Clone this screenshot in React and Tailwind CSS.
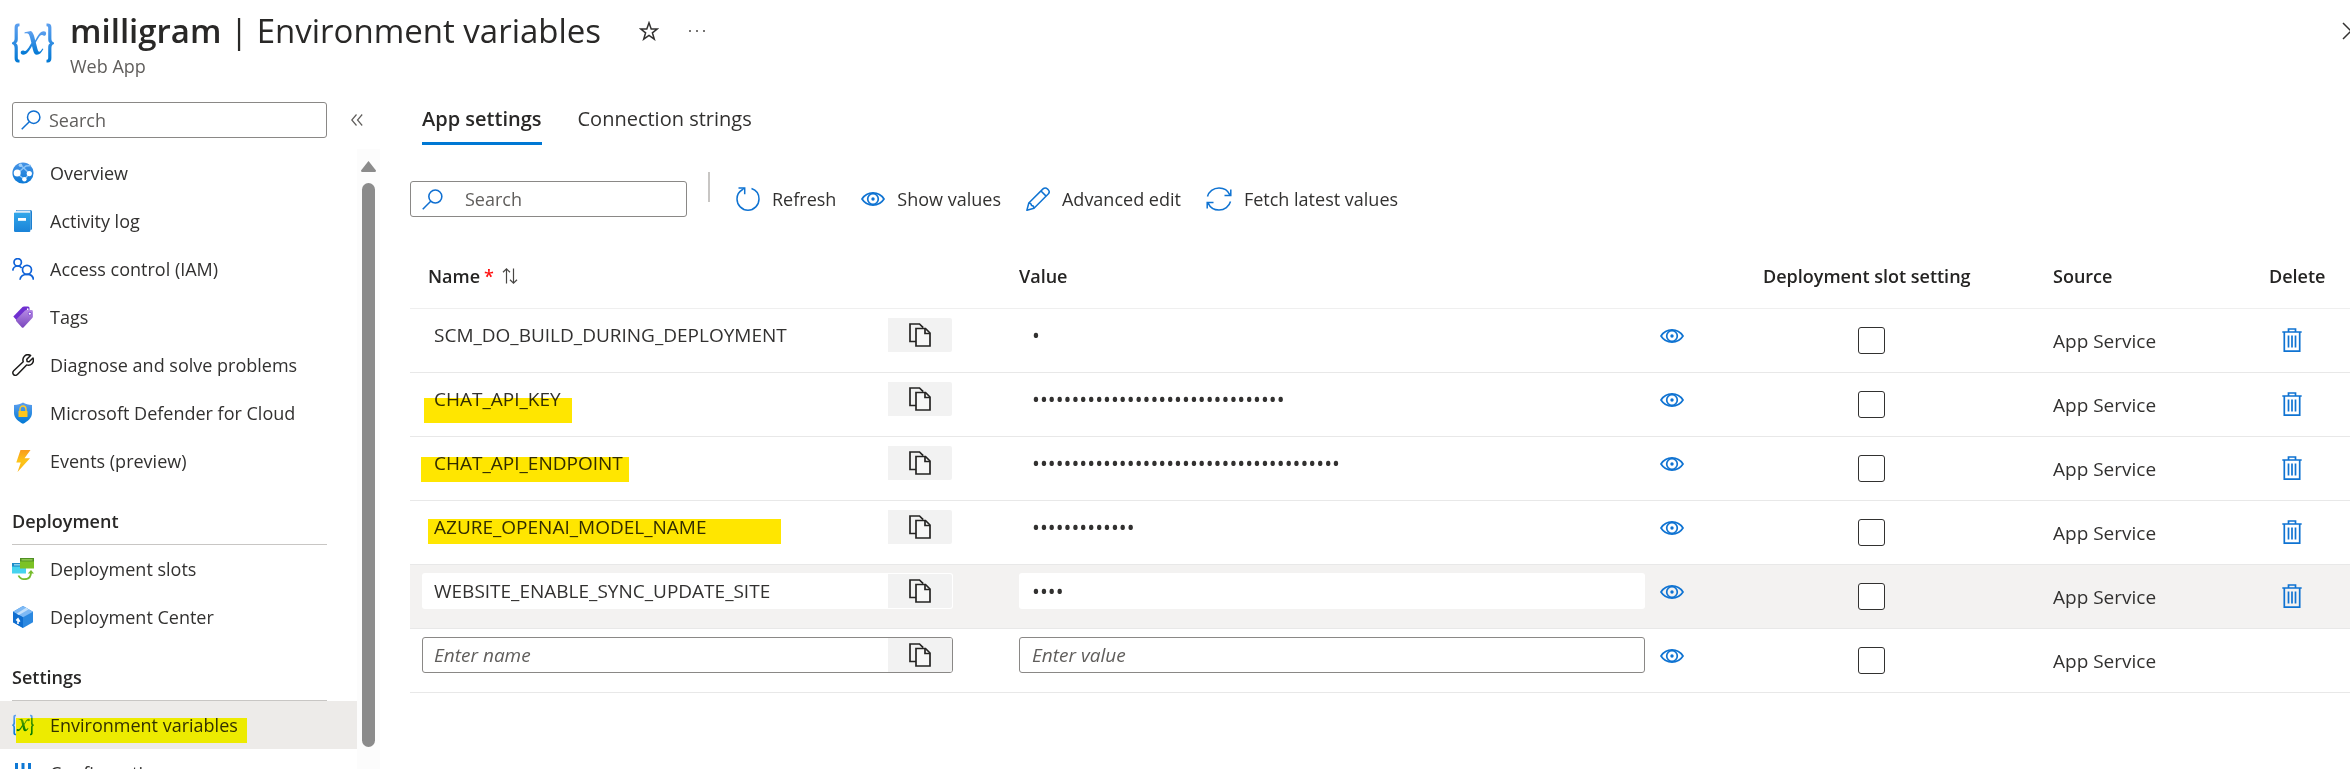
import React from "react";

/* ---------- icons ---------- */

function VariableIcon({ className, id }) {
  return (
    <svg viewBox="0 0 42 40" className={className} aria-hidden="true">
      <defs>
        <linearGradient id={id} x1="0" y1="0" x2="0" y2="1">
          <stop offset="0" stopColor="#5ea0ef" />
          <stop offset="1" stopColor="#0078d4" />
        </linearGradient>
      </defs>
      <g fill={`url(#${id})`}>
        <path d="M7.500 0.500h-1.200C3.600.5 2.600 2 2.600 4.600v10.600c0 2.500-.7 3.600-2.600 4.300v1.600c1.900.7 2.600 1.800 2.600 4.300v9.600c0 2.900 1 4.500 3.700 4.500h1.200v-2.700c-1.200 0-1.700-.6-1.700-2V24.500c0-2.300-.6-3.500-1.900-4.200 1.300-.7 1.900-1.900 1.900-4.200V5.200c0-1.400.5-2 1.700-2z" />
        <path d="M34.500 0.500h1.200c2.700 0 3.700 1.500 3.700 4.100v10.600c0 2.500.7 3.600 2.600 4.300v1.600c-1.900.7-2.600 1.800-2.600 4.300v9.600c0 2.900-1 4.500-3.700 4.500h-1.200v-2.700c1.200 0 1.700-.6 1.700-2V24.500c0-2.300.6-3.500 1.900-4.200-1.300-.7-1.900-1.900-1.900-4.200V5.200c0-1.400-.5-2-1.700-2z" />
        <path d="M12.600 9.300 19 8c2 1.600 2.900 4 3.600 7l.6 2.400c2.300-4 4.800-9.200 8.600-9.200 1.500 0 2.300.9 2.300 2.200 0 1.400-.9 2.300-2.100 2.300-1 0-1.500-.6-2.400-.6-1.500 0-3.700 3.600-5.800 7.400l1.600 6.200c.5 1.900 1 3 1.800 3 1 0 2-1.300 3.200-3.300l1 .6c-1.800 3.400-3.800 5.800-6.500 5.800-2.200 0-3.100-1.500-3.900-4.700l-1-4.100c-2.600 4.600-5 8.800-8.800 8.800-1.600 0-2.500-.9-2.500-2.200s.9-2.200 2.100-2.200c1.100 0 1.500.6 2.400.6 1.500 0 3.700-3.500 6.200-7.900l-1.300-5.400c-.8-3.200-1.500-4.500-3.500-4.500-.7 0-1.300.1-2 .3z" />
      </g>
    </svg>
  );
}

function SearchIcon({ className }) {
  return (
    <svg viewBox="0 0 20 20" className={className} fill="none" stroke="#0f6fd1" strokeWidth="1.500" aria-hidden="true">
      <circle cx="12.700" cy="7.200" r="6.200" />
      <path d="M8.300 11.700.7 19.300" />
    </svg>
  );
}

function StarIcon() {
  return (
    <svg viewBox="0 0 20 20" className="size-5" fill="none" stroke="#323130" strokeWidth="1.500" aria-hidden="true">
      <path d="M10 1.800l2.200 6.100h6.200l-5 3.900 1.900 6.400L10 14.400l-5.300 3.800 1.900-6.400-5-3.900h6.200z" />
    </svg>
  );
}

function CollapseIcon() {
  return (
    <svg viewBox="0 0 12 12" className="size-3" fill="none" stroke="#605e5c" strokeWidth="1.200" aria-hidden="true">
      <path d="M5.500.5 0.800 6l4.700 5.500M11.200.5 6.500 6l4.700 5.500" />
    </svg>
  );
}

function GlobeIcon() {
  return (
    <svg viewBox="0 0 22 22" className="size-[22px]" aria-hidden="true">
      <defs>
        <linearGradient id="globe" x1="0" y1="0" x2="0" y2="1">
          <stop offset="0" stopColor="#4894e6" />
          <stop offset="1" stopColor="#0b79d6" />
        </linearGradient>
      </defs>
      <circle cx="11" cy="11" r="10.600" fill="url(#globe)" />
      <path d="M8 2.500 17.500 11.500M5 11.500 14 4 19 3.500M5 11.500 12.500 17.500 17.500 11.500" stroke="#8cc4f7" strokeWidth="1.400" fill="none" />
      <circle cx="5.200" cy="11" r="3.500" fill="#fff" />
      <circle cx="17.300" cy="11.600" r="2.600" fill="#fff" />
      <circle cx="12.400" cy="17.300" r="2.200" fill="#fff" />
      <circle cx="8.500" cy="3.300" r="1.800" fill="#9fd0fa" />
    </svg>
  );
}

function BookIcon() {
  return (
    <svg viewBox="0 0 22 22" className="size-[22px]" aria-hidden="true">
      <defs>
        <linearGradient id="book" x1="0" y1="0" x2="0" y2="1">
          <stop offset="0" stopColor="#32a7ea" />
          <stop offset="1" stopColor="#1a83d8" />
        </linearGradient>
      </defs>
      <path d="M4 0h14.500q1.500 0 1.500 1.500v17q0 1.500-1.500 1.500H4z" fill="#1b7fd0" />
      <path d="M3 2.600 4.600.6h13.800V20H4z" fill="#dcebf8" />
      <path d="M2 2.700h15.300q1 0 1 1V21q0 1-1 1H3.300Q2 22 2 20.700z" fill="url(#book)" />
      <rect x="6" y="8" width="8" height="2.800" fill="#fff" />
    </svg>
  );
}

function PeopleIcon() {
  return (
    <svg viewBox="0 0 22 22" className="size-[22px]" fill="none" stroke="#0f62d8" strokeWidth="1.700" aria-hidden="true">
      <circle cx="5.700" cy="4.300" r="3.700" />
      <path d="M.8 12.600C.9 10 3 8 5.700 8c1.700 0 3.100.7 4 1.900" />
      <circle cx="15" cy="11.800" r="4.500" />
      <path d="M8 21.800c.2-3.400 3.300-5.500 7-5.500s6.300 2.100 6.400 5.500" />
    </svg>
  );
}

function TagIcon() {
  return (
    <svg viewBox="0 0 22 22" className="size-[22px]" aria-hidden="true">
      <defs>
        <linearGradient id="tag" x1="0" y1="0" x2="0" y2="1">
          <stop offset="0" stopColor="#b58ae4" />
          <stop offset="1" stopColor="#7a46bd" />
        </linearGradient>
      </defs>
      <path d="M1.300 10.500 10.500 1q.6-.6 1.500-.6h4q1.500 0 1.500 1.500v5L7 17z" fill="#6f2fd0" />
      <path d="M4.500 13.300 13 4.600q.6-.6 1.500-.6h5q1.400 0 1.400 1.400v5.200q0 .9-.6 1.500L11.500 21.400q-.8.700-1.600 0L4.500 15.500q-1-1.100 0-2.200z" fill="url(#tag)" />
      <circle cx="17.800" cy="7.700" r="1.500" fill="#fff" stroke="#6f2fd0" strokeWidth=".8" />
      <circle cx="15.700" cy="3.200" r=".9" fill="#fff" />
    </svg>
  );
}

function WrenchIcon() {
  return (
    <svg viewBox="0 0 22 22" className="size-[22px]" fill="none" stroke="#1b1a19" strokeWidth="1.500" strokeLinejoin="round" aria-hidden="true">
      <path d="M18.600 1.500 14.800 5.300l.3 2.200 2 .3 3.900-3.800c.7 2 .4 4.300-1 5.700-1.500 1.500-3.500 1.800-5.400 1.200L5.400 20.500c-1.200 1.200-2.800 1.100-3.800.1s-1.200-2.700.1-3.900l9.500-9c-.6-2-.3-4 1.200-5.500 1.600-1.600 4.100-1.900 6.200-.7z" />
    </svg>
  );
}

function ShieldIcon() {
  return (
    <svg viewBox="0 0 22 22" className="size-[22px]" aria-hidden="true">
      <defs>
        <linearGradient id="shield" x1="0" y1="0" x2="0" y2="1">
          <stop offset="0" stopColor="#5ea0ef" />
          <stop offset="1" stopColor="#0078d4" />
        </linearGradient>
      </defs>
      <path d="M11 .5c2.500 1.800 5.300 2.300 9 2.400v8c0 5-4.500 8.500-9 10.800C6.500 19.400 2 15.900 2 10.900v-8c3.700-.1 6.500-.6 9-2.400z" fill="url(#shield)" />
      <path d="M8 9.500V7.200c0-1.900 1.200-3.200 3-3.200s3 1.300 3 3.200v2.300" fill="none" stroke="#ffca2a" strokeWidth="1.400" />
      <rect x="6.500" y="9" width="9" height="6" rx=".6" fill="#ffc61c" />
    </svg>
  );
}

function BoltIcon() {
  return (
    <svg viewBox="0 0 22 22" className="size-[22px]" aria-hidden="true">
      <defs>
        <linearGradient id="bolt" x1="0" y1="0" x2="0" y2="1">
          <stop offset="0" stopColor="#f99b1c" />
          <stop offset=".5" stopColor="#fcc419" />
          <stop offset="1" stopColor="#fbb216" />
        </linearGradient>
      </defs>
      <path d="M8.500 0H18.500L12.500 8.200H18L5.500 22 8.800 12.500H4.300z" fill="url(#bolt)" />
    </svg>
  );
}

function SlotsIcon() {
  return (
    <svg viewBox="0 0 22 22" className="size-[22px]" aria-hidden="true">
      <rect x="0" y="5" width="14" height="10.500" fill="#46d3ee" />
      <rect x="0" y="5" width="14" height="3.600" fill="#1e8cc8" />
      <rect x="2" y="6.200" width="6" height="1.200" fill="#a6e3f5" />
      <rect x="8" y="0" width="14" height="10.500" fill="#7cc225" />
      <rect x="8" y="0" width="14" height="3.400" fill="#4f8f22" />
      <rect x="9.500" y="1.200" width="11" height="1.300" fill="#9bd35a" />
      <path d="M6.500 17.500c1 2.500 3.500 3.700 6 3.700 4 0 6.500-2.700 6.500-7" fill="none" stroke="#76bc2d" strokeWidth="1.800" />
      <path d="M15.800 15.500 19 12l3 3.500z" fill="#76bc2d" />
    </svg>
  );
}

function BoxIcon() {
  return (
    <svg viewBox="0 0 22 22" className="size-[22px]" aria-hidden="true">
      <path d="M11 0 21 5.700v10.600L11 22 1 16.300V5.700z" fill="#2b88e0" />
      <path d="M11 0 21 5.700 11 11.300 1 5.700z" fill="#7db9f5" />
      <path d="M11 11.300V22L1 16.300V5.700z" fill="#0f6ed0" />
      <path d="M14 1.700 4.500 7.700 7 9.100 16.800 3.300z" fill="#c3e0fb" />
      <path d="M6 18v-4.800M4.200 14.500 6 12.800l1.800 2.800" fill="none" stroke="#fff" strokeWidth="1.600" />
    </svg>
  );
}

function SlidersIcon() {
  return (
    <svg viewBox="0 0 22 22" className="size-[22px]" aria-hidden="true">
      <path d="M4.500 1v20M11 1v20M17.500 1v20" stroke="#0f78d4" strokeWidth="3" />
      <rect x="2" y="12" width="5" height="4" fill="#5ea0ef" />
      <rect x="8.500" y="8" width="5" height="4" fill="#5ea0ef" />
      <rect x="15" y="14" width="5" height="4" fill="#5ea0ef" />
    </svg>
  );
}

function RefreshIcon() {
  return (
    <svg viewBox="0 0 24 24" className="size-6" fill="none" stroke="#0f73d2" strokeWidth="1.500" aria-hidden="true">
      <path d="M15.500 1.500C20 3 23 7.200 23 12c0 6.100-4.900 11.200-11 11.200S1 18.100 1 12c0-4 2.200-7.600 5.600-9.500L8 1.300" />
      <path d="M2.500 1h6.200v6.200" />
    </svg>
  );
}

function EyeIcon() {
  return (
    <svg viewBox="0 0 24 14" className="w-6 h-[14px]" fill="none" stroke="#0f73d2" strokeWidth="1.700" aria-hidden="true">
      <path d="M1 7C3.500 3 7.500.9 12 .9S20.500 3 23 7c-2.500 4-6.500 6.100-11 6.100S3.500 11 1 7z" />
      <circle cx="12" cy="7" r="5.300" />
      <circle cx="12" cy="7" r="1.700" fill="#0f73d2" stroke="none" />
    </svg>
  );
}

function PencilIcon() {
  return (
    <svg viewBox="0 0 24 24" className="size-6" fill="none" stroke="#0f73d2" strokeWidth="1.500" strokeLinejoin="round" aria-hidden="true">
      <path d="M.9 23.200 2.800 16 17 1.900c1.300-1.300 3.200-1.300 4.400 0l.8.8c1.200 1.200 1.200 3 0 4.300L8 21.200z" />
      <path d="M15 4l5.100 5.100M2.800 16c2 .1 2.600.8 2.700 2.500 1.600 0 2.400.9 2.500 2.700" />
    </svg>
  );
}

function SyncIcon() {
  return (
    <svg viewBox="0 0 26 24" className="h-6 w-[26px]" fill="none" stroke="#0f73d2" strokeWidth="1.500" aria-hidden="true">
      <path d="M1.500 9.500C2.800 4.600 7.400 1 13 1c4.900 0 9 2.700 10.900 6.900M24.800 2.500v5.900h-6.300" />
      <path d="M24.500 14.500C23.200 19.400 18.600 23 13 23c-4.900 0-9-2.700-10.900-6.900M1.200 21.500v-5.900h6.300" />
    </svg>
  );
}

function SortIcon() {
  return (
    <svg viewBox="0 0 16 16" className="size-4" fill="none" stroke="#484644" strokeWidth="1.200" aria-hidden="true">
      <path d="M4.500 15.500V1M1 4.300 4.500.9 8 4.300M11.500.5V15M8 11.700l3.500 3.400 3.500-3.400" />
    </svg>
  );
}

function CopyIcon() {
  return (
    <svg viewBox="0 0 22 24" className="h-6 w-[22px]" fill="none" stroke="#252423" strokeWidth="1.700" aria-hidden="true">
      <path d="M7 18.500H1V1h9.500l3.700 3.700" />
      <path d="M7 5.500h9.500L21 10v13H7z" fill="#f7f7f7" />
      <path d="M16 5.500V10.500h5" />
    </svg>
  );
}

function TrashIcon() {
  return (
    <svg viewBox="0 0 20 24" className="h-6 w-5" fill="none" stroke="#0f73d2" strokeWidth="1.700" aria-hidden="true">
      <path d="M.3 4h19.400M6.500 3.800V1h7v2.800M2.300 4v19.100h15.400V4" />
      <path d="M6.500 7.500v12M10 7.500v12M13.500 7.500v12" />
    </svg>
  );
}

/* ---------- sidebar ---------- */

function NavItem({ icon, label, active }) {
  return (
    <a
      href="#"
      className={
        "relative flex h-12 shrink-0 items-center gap-4 px-3 " + (active ? "bg-[#edebe9]" : "")
      }
      aria-current={active ? "page" : undefined}
    >
      <span className="flex w-[22px] justify-center">{icon}</span>
      <span className="whitespace-nowrap">{label}</span>
      {active && (
        <span className="absolute top-[17px] left-4 h-[25px] w-[231px] bg-[#ffff00] mix-blend-multiply" />
      )}
    </a>
  );
}

function NavHeading({ children }) {
  return (
    <h2 className="mr-[30px] ml-3 flex h-[60px] shrink-0 items-end border-b border-[#c8c6c4] pb-[9px] leading-7 font-semibold text-[#292827]">
      {children}
    </h2>
  );
}

function Sidebar() {
  return (
    <aside className="flex w-[380px] shrink-0 flex-col">
      <div className="flex items-center gap-6 pt-[7px] pl-3">
        <label className="flex h-9 w-[315px] items-center gap-2 rounded-[3px] border border-[#8a8886] px-2">
          <SearchIcon className="size-5 shrink-0" />
          <input
            type="text"
            aria-label="Search menu"
            placeholder="Search"
            className="w-full min-w-0 outline-none placeholder:text-[#605e5c]"
          />
        </label>
        <button aria-label="Collapse menu">
          <CollapseIcon />
        </button>
      </div>
      <div className="mt-[11px] flex min-h-0 flex-1 overflow-hidden">
        <nav className="flex min-w-0 flex-1 flex-col overflow-hidden">
          <NavItem icon={<GlobeIcon />} label="Overview" />
          <NavItem icon={<BookIcon />} label="Activity log" />
          <NavItem icon={<PeopleIcon />} label="Access control (IAM)" />
          <NavItem icon={<TagIcon />} label="Tags" />
          <NavItem icon={<WrenchIcon />} label="Diagnose and solve problems" />
          <NavItem icon={<ShieldIcon />} label="Microsoft Defender for Cloud" />
          <NavItem icon={<BoltIcon />} label="Events (preview)" />
          <NavHeading>Deployment</NavHeading>
          <NavItem icon={<SlotsIcon />} label="Deployment slots" />
          <NavItem icon={<BoxIcon />} label="Deployment Center" />
          <NavHeading>Settings</NavHeading>
          <NavItem
            icon={<VariableIcon className="h-[22px] w-[22px]" id="var-small" />}
            label="Environment variables"
            active
          />
          <NavItem icon={<SlidersIcon />} label="Configuration" />
        </nav>
        <div className="flex w-[23px] shrink-0 flex-col items-center bg-[#fcfcfc] pt-3 pb-[22px]">
          <svg viewBox="0 0 15 11" className="h-[11px] w-[15px]" aria-hidden="true">
            <path d="M7.500 0 15 9.500q0 1.500-1.200 1.500H1.200Q0 11 0 9.500z" fill="#8b8b8b" />
          </svg>
          <div className="mt-[11px] w-[13px] flex-1 rounded-full bg-[#8b8b8b]" />
        </div>
      </div>
    </aside>
  );
}

/* ---------- settings table ---------- */

const rows = [
  { name: "SCM_DO_BUILD_DURING_DEPLOYMENT", length: 1 },
  { name: "CHAT_API_KEY", length: 32, mark: "top-[25px] left-[14px] w-[148px]" },
  { name: "CHAT_API_ENDPOINT", length: 39, mark: "top-5 left-[11px] w-[208px]" },
  { name: "AZURE_OPENAI_MODEL_NAME", length: 13, mark: "top-[18px] left-[18px] w-[353px]" },
  { name: "WEBSITE_ENABLE_SYNC_UPDATE_SITE", length: 4, hovered: true },
  { name: "", length: 0, blank: true },
];

function SettingRow({ row }) {
  const frame = row.blank ? "border-[#8a8886]" : "border-transparent";
  return (
    <tr className={"h-16 border-b border-[#e8e8e8] " + (row.hovered ? "bg-[#f3f2f1]" : "")}>
      <td className="relative px-3 pt-2 align-top">
        <div className={"flex h-9 w-[531px] overflow-hidden rounded-[3px] border " + frame + (row.hovered ? " bg-white" : "")}>
          <input
            type="text"
            aria-label="Setting name"
            defaultValue={row.name}
            placeholder="Enter name"
            className="min-w-0 flex-1 px-[11px] text-[19px] outline-none placeholder:text-[#605e5c] placeholder:italic"
          />
          <button aria-label="Copy name" className="flex w-16 items-center justify-center bg-[#f2f2f2]">
            <CopyIcon />
          </button>
        </div>
        {row.mark && (
          <span className={"pointer-events-none absolute h-[25px] bg-[#ffe600] mix-blend-multiply " + row.mark} />
        )}
      </td>
      <td className="pt-2 pr-[67px] pl-3 align-top">
        <div className="flex items-center gap-[15px]">
          <input
            type={row.blank ? "text" : "password"}
            aria-label="Setting value"
            defaultValue={"x".repeat(row.length)}
            placeholder="Enter value"
            className={
              "h-9 min-w-0 flex-1 rounded-[3px] border px-3 outline-none placeholder:text-[#605e5c] placeholder:italic " +
              frame +
              (row.blank ? " text-[19px]" : " text-[21px]") +
              (row.hovered ? " bg-white" : "")
            }
          />
          <button aria-label="Show value" className="pt-[3px]">
            <EyeIcon />
          </button>
        </div>
      </td>
      <td className="pr-[50px]">
        <div className="flex justify-center">
          <input
            type="checkbox"
            aria-label="Deployment slot setting"
            className="size-[27px] appearance-none rounded-[3px] border border-[#323130] bg-white"
          />
        </div>
      </td>
      <td className="px-3 pt-px text-[19px]">App Service</td>
      <td className="pl-[25px]">
        {!row.blank && (
          <button aria-label="Delete setting" className="block">
            <TrashIcon />
          </button>
        )}
      </td>
    </tr>
  );
}

function SettingsTable() {
  return (
    <table className="mt-[27px] w-full table-fixed border-collapse text-left">
      <colgroup>
        <col className="w-[597px]" />
        <col />
        <col className="w-[290px]" />
        <col className="w-[216px]" />
        <col className="w-[93px]" />
      </colgroup>
      <thead>
        <tr className="h-16 border-b border-[#efefef] text-[#252423]">
          <th className="pl-[18px] font-semibold">
            <span className="flex items-center">
              Name
              <span className="ml-1 text-[#ff1010]">*</span>
              <button aria-label="Sort by name" className="ml-2">
                <SortIcon />
              </button>
            </span>
          </th>
          <th className="px-3 font-semibold">Value</th>
          <th className="px-3 font-semibold">Deployment slot setting</th>
          <th className="px-3 font-semibold">Source</th>
          <th className="px-3 font-semibold">Delete</th>
        </tr>
      </thead>
      <tbody>
        {rows.map((row) => (
          <SettingRow key={row.name} row={row} />
        ))}
      </tbody>
    </table>
  );
}

/* ---------- page ---------- */

function Command({ icon, children }) {
  return (
    <button className="flex items-center gap-3 whitespace-nowrap">
      {icon}
      {children}
    </button>
  );
}

export default function App() {
  return (
    <div className="flex h-screen flex-col overflow-hidden bg-white font-['Open_Sans','Noto_Sans',sans-serif] text-[18px] leading-7 text-[#323130]">
      <header className="flex h-[95px] shrink-0 items-start pl-3">
        <VariableIcon className="mt-[23px] h-10 w-[42px]" id="var-large" />
        <div className="ml-4">
          <div className="flex items-center">
            <h1 className="pt-2 text-[33px] leading-[46px] whitespace-nowrap text-[#292827]">
              <span className="font-semibold">milligram</span> | Environment variables
            </h1>
            <div className="ml-[38px] flex items-center gap-[30px] pt-2">
              <button aria-label="Add to favorites">
                <StarIcon />
              </button>
              <button aria-label="More options" className="flex gap-[5px]">
                <span className="size-[2px] rounded-full bg-[#484644]" />
                <span className="size-[2px] rounded-full bg-[#484644]" />
                <span className="size-[2px] rounded-full bg-[#484644]" />
              </button>
            </div>
          </div>
          <p className="leading-6 text-[#605e5c]">Web App</p>
        </div>
        <button aria-label="Close" className="mt-[22px] -mr-[10px] ml-auto">
          <svg viewBox="0 0 18 18" className="size-[18px]" fill="none" stroke="#323130" strokeWidth="1.500" aria-hidden="true">
            <path d="M1 1l16 16M17 1 1 17" />
          </svg>
        </button>
      </header>

      <div className="flex min-h-0 flex-1">
        <Sidebar />
        <main className="min-w-0 flex-1 pl-[30px]">
          <div role="tablist" className="flex gap-9 pl-3 text-[20px]">
            <button role="tab" aria-selected="true" className="h-[50px] border-b-[3px] border-[#0078d4] font-semibold text-[#292827]">
              App settings
            </button>
            <button role="tab" aria-selected="false" className="h-[50px] border-b-[3px] border-transparent">
              Connection strings
            </button>
          </div>

          <div className="mt-[27px] flex h-[45px] items-end">
            <label className="flex h-9 w-[277px] items-center gap-[22px] rounded-[3px] border border-[#8a8886] px-[11px]">
              <SearchIcon className="size-[21px] shrink-0" />
              <input
                type="text"
                aria-label="Search settings"
                placeholder="Search"
                className="w-full min-w-0 outline-none placeholder:text-[#605e5c]"
              />
            </label>
            <span className="ml-[21px] h-[30px] w-[2px] self-start bg-[#c8c6c4]" />
            <div className="ml-[26px] flex h-9 items-center gap-[25px]">
              <Command icon={<RefreshIcon />}>Refresh</Command>
              <Command icon={<EyeIcon />}>Show values</Command>
              <Command icon={<PencilIcon />}>Advanced edit</Command>
              <Command icon={<SyncIcon />}>Fetch latest values</Command>
            </div>
          </div>

          <SettingsTable />
        </main>
      </div>
    </div>
  );
}
